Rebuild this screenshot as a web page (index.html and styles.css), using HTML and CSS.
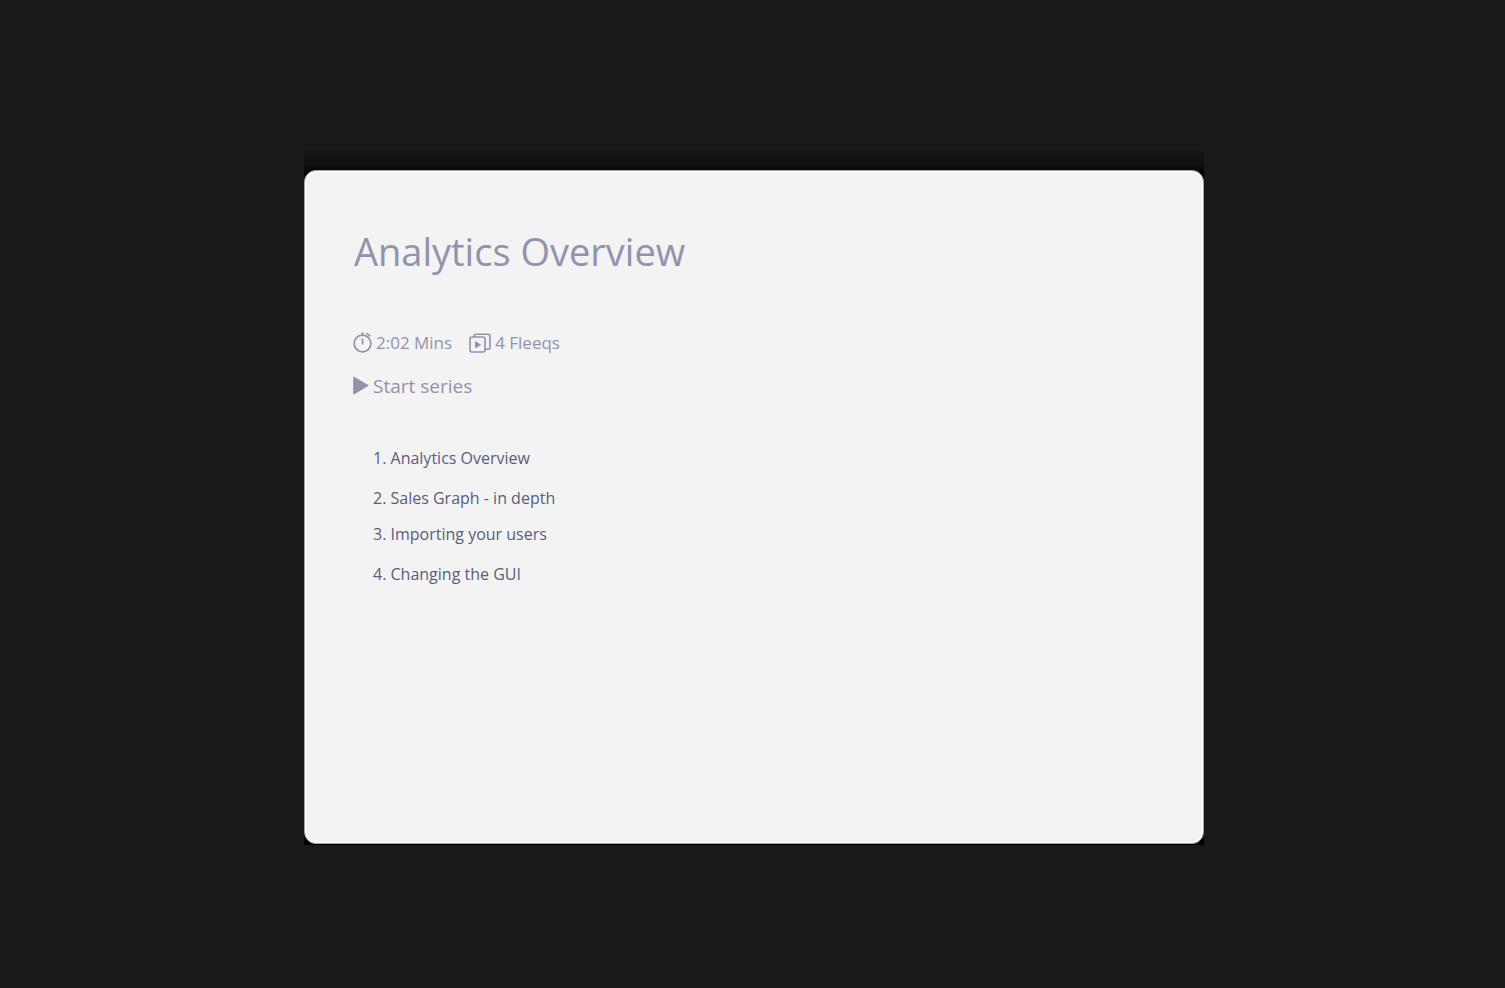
FILE: index.html
```html
<!DOCTYPE html>
<html lang="en">
<head>
    <meta charset="UTF-8">
    <meta name="viewport" content="width=device-width, initial-scale=1.0">
    <title>Analytics Overview</title>
    <link rel="stylesheet" href="styles.css">
</head>
<body>

<div class="frame">
    <main class="card">
        <h1>Analytics Overview</h1>

        <div class="meta">
            <span class="meta-item">
                <svg width="19" height="22" viewBox="0 0 19 22" fill="none" stroke="currentColor" stroke-width="1.7" stroke-linecap="round">
                    <circle cx="9.5" cy="11.5" r="8.4"/>
                    <path d="M9.5 7v4.7M9.5 .8v2.2M13.8 1.6l3 2"/>
                </svg>
                2:02 Mins
            </span>
            <span class="meta-item">
                <svg width="22" height="22" viewBox="0 0 22 22" fill="none" stroke="currentColor" stroke-width="1.6" stroke-linejoin="round">
                    <rect x="1" y="5" width="15" height="15" rx="2"/>
                    <path d="M5 5V4.2a2 2 0 0 1 2-2h12a2 2 0 0 1 2 2v11a2 2 0 0 1-2 2h-3"/>
                    <path d="M6.5 9.8v6l5-3z" fill="currentColor" stroke-width="1"/>
                </svg>
                4 Fleeqs
            </span>
        </div>

        <button class="start" type="button">
            <svg width="16" height="20" viewBox="0 0 16 20" fill="currentColor" stroke="currentColor" stroke-linejoin="round">
                <path d="M.8 1v17L15.2 9.5z"/>
            </svg>
            Start series
        </button>

        <ol class="series">
            <li><a href="#overview">1. Analytics Overview</a></li>
            <li><a href="#sales">2. Sales Graph - in depth</a></li>
            <li class="close"><a href="#users">3. Importing your users</a></li>
            <li><a href="#gui">4. Changing the GUI</a></li>
        </ol>
    </main>
</div>

</body>
</html>
```

FILE: styles.css
```css
* {
    box-sizing: border-box;
}
body {
    margin: 0;
    padding: 151px 0 20px 3px;
    background: #191919;
    color: #9292ac;
    font-family: "Open Sans", sans-serif;
}
/* dark strip above the card, black behind its corners */
.frame {
    max-width: 900px;
    margin: 0 auto;
    padding: 19px 0 1px;
    background: linear-gradient(#151515, #101010 14px, #000 24px);
}
.card {
    min-height: 674px;
    padding: 52px 48px;
    background: #f3f3f3;
    border: 1px solid #a0a0a0;
    border-radius: 12px;
    box-shadow: inset 0 0 0 1px #fff;
}
h1 {
    margin: 0;
    padding-left: 1px;
    font-size: 38px;
    font-weight: 400;
    line-height: 56px;
}
.meta {
    display: flex;
    gap: 17px;
    margin-top: 52px;
    font-size: 17px;
    line-height: 24px;
}
.meta-item {
    display: flex;
    align-items: center;
    gap: 4px;
}
.start {
    display: flex;
    align-items: center;
    gap: 4px;
    margin-top: 17px;
    padding: 0;
    background: none;
    border: none;
    color: inherit;
    font: 400 19px/28px "Open Sans", sans-serif;
    cursor: pointer;
}
.series {
    margin: 46px 0 0;
    padding: 0 0 0 20px;
    list-style: none;
    font-size: 16px;
    line-height: 24px;
}
.series li {
    margin-bottom: 16px;
}
.series .close {
    margin-top: -4px;
}
.series a {
    color: #5c5c7b;
    text-decoration: none;
}
```
